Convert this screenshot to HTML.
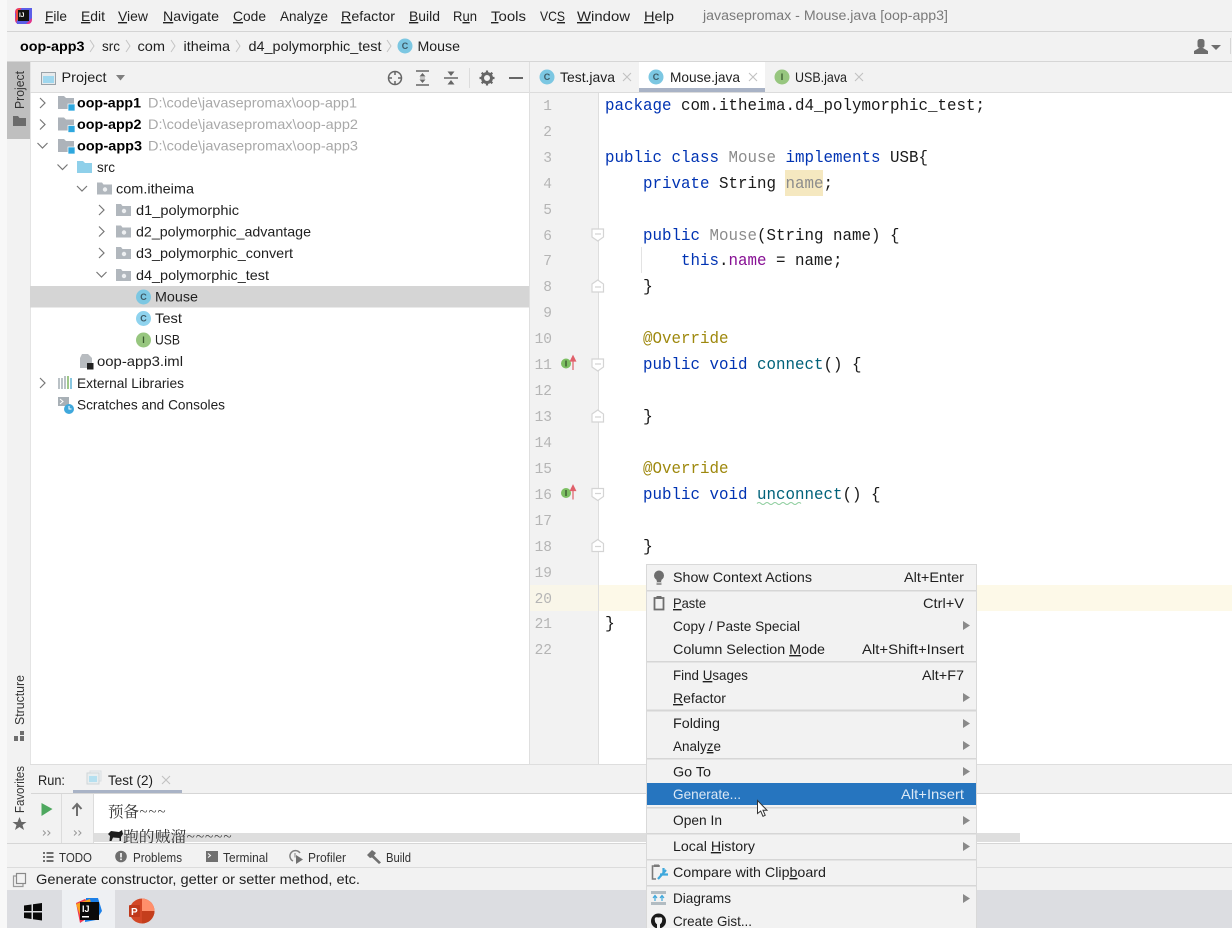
<!DOCTYPE html>
<html><head><meta charset="utf-8"><title>Mouse.java</title>
<style>
html,body{margin:0;padding:0;background:#fff;width:1232px;height:928px;overflow:hidden}
svg{display:block;filter:blur(.3px)}
text{font-family:"Liberation Sans","Noto Sans CJK SC",sans-serif;font-size:14px;fill:#1f1f1f;white-space:pre}
.m{font-size:14px;fill:#222}
.g{fill:#a9a9a9}
.b{font-weight:bold;fill:#000}
.s{font-size:12.5px;fill:#333}
.c{font-family:"Liberation Mono","DejaVu Sans Mono",monospace;font-size:16.5px;fill:#1a1a1a}
.k{fill:#0033b3}.u{fill:#8c8c8c}.f{fill:#871094}.a{fill:#9e880d}.d{fill:#00627a}
.n{font-family:"Liberation Mono",monospace;font-size:14.5px;fill:#b5b5b5;text-anchor:end}
.l{font-size:9px;font-weight:bold;fill:#3d5a66;text-anchor:middle}
.ch{fill:none;stroke:#777;stroke-width:1.2}
.cr{fill:none;stroke:#c4c4c4;stroke-width:1}
.x{fill:none;stroke:#c2c2c2;stroke-width:1.1}
.fd{fill:#fff;stroke:#d4d4d4;stroke-width:1.2}
.sep{fill:#d6d6d6}
.ar{fill:#8a8a8a}
.un{text-decoration:underline}
.r{font-family:"Noto Serif CJK SC",serif;font-size:15.5px;fill:#333}
</style></head><body>
<svg width="1232" height="928" viewBox="0 0 1232 928" xmlns="http://www.w3.org/2000/svg">
<defs>
<g id="pk"><path d="M0 1H5L6.5 3H15V13H0Z" fill="#b1b7bd"/><circle cx="8" cy="8" r="2.2" fill="#eef0f2"/></g>
<g id="mod"><path d="M0 1H6L8 3H16V14H0Z" fill="#adb3ba"/><rect x="10" y="9" width="7" height="7" fill="#2ea7de" stroke="#fff" stroke-width=".7"/></g>
</defs>

<!-- base -->
<rect width="1232" height="928" fill="#f2f2f2"/>
<rect width="7" height="928" fill="#f8f8f8"/>
<rect x="7" y="31" width="1225" height="1" fill="#d4d4d4"/>
<rect x="7" y="61" width="1225" height="1" fill="#d6d6d6"/>

<!-- logo -->
<rect x="15" y="8" width="17" height="16" rx="4" fill="#e0348b"/>
<path d="M15 14L22 8H32V18L26 24H17Z" fill="#5b5ee8"/>
<path d="M16 10L20 8L22 14L16 22Z" fill="#f04a3e"/>
<rect x="18" y="10" width="11" height="11" fill="#111"/>
<text x="19" y="17" style="font-size:6.5px;font-weight:bold;fill:#fff">IJ</text>

<!-- menu -->
<g>
<text class="m" y="21" x="45" textLength="22" lengthAdjust="spacingAndGlyphs"><tspan class="un">F</tspan>ile</text>
<text class="m" y="21" x="81" textLength="24" lengthAdjust="spacingAndGlyphs"><tspan class="un">E</tspan>dit</text>
<text class="m" y="21" x="118" textLength="30" lengthAdjust="spacingAndGlyphs"><tspan class="un">V</tspan>iew</text>
<text class="m" y="21" x="163" textLength="56" lengthAdjust="spacingAndGlyphs"><tspan class="un">N</tspan>avigate</text>
<text class="m" y="21" x="233" textLength="33" lengthAdjust="spacingAndGlyphs"><tspan class="un">C</tspan>ode</text>
<text class="m" y="21" x="280" textLength="48" lengthAdjust="spacingAndGlyphs">Analy<tspan class="un">z</tspan>e</text>
<text class="m" y="21" x="341" textLength="54" lengthAdjust="spacingAndGlyphs"><tspan class="un">R</tspan>efactor</text>
<text class="m" y="21" x="409" textLength="31" lengthAdjust="spacingAndGlyphs"><tspan class="un">B</tspan>uild</text>
<text class="m" y="21" x="453" textLength="24" lengthAdjust="spacingAndGlyphs">R<tspan class="un">u</tspan>n</text>
<text class="m" y="21" x="491" textLength="35" lengthAdjust="spacingAndGlyphs"><tspan class="un">T</tspan>ools</text>
<text class="m" y="21" x="540" textLength="25" lengthAdjust="spacingAndGlyphs">VC<tspan class="un">S</tspan></text>
<text class="m" y="21" x="577" textLength="53" lengthAdjust="spacingAndGlyphs"><tspan class="un">W</tspan>indow</text>
<text class="m" y="21" x="644" textLength="30" lengthAdjust="spacingAndGlyphs"><tspan class="un">H</tspan>elp</text>
<text y="20" x="703" textLength="245" lengthAdjust="spacingAndGlyphs" style="font-size:13.5px;fill:#7a7a7a">javasepromax - Mouse.java [oop-app3]</text>
</g>

<!-- breadcrumb -->
<text class="b" y="51" x="20" textLength="64.5" lengthAdjust="spacingAndGlyphs">oop-app3</text>
<path class="cr" d="M90 40L94 46L90 52M126 40L130 46L126 52M171 40L175 46L171 52M236 40L240 46L236 52M387 40L391 46L387 52"/>
<text y="51" x="102" textLength="18" lengthAdjust="spacingAndGlyphs">src</text>
<text y="51" x="137.5" textLength="27.5" lengthAdjust="spacingAndGlyphs">com</text>
<text y="51" x="183.5" textLength="46.5" lengthAdjust="spacingAndGlyphs">itheima</text>
<text y="51" x="248.5" textLength="133" lengthAdjust="spacingAndGlyphs">d4_polymorphic_test</text>
<circle cx="405" cy="46" r="7.5" fill="#7cc7e2"/><text class="l" x="405" y="49">C</text>
<text y="51" x="417.5" textLength="42.5" lengthAdjust="spacingAndGlyphs">Mouse</text>
<!-- user -->
<rect x="1197.500" y="39" width="7" height="9" rx="2.500" fill="#6e6e6e"/><path d="M1194 54V51L1199 48H1203L1208 51V54Z" fill="#6e6e6e"/>
<path d="M1211 45H1221L1216 50Z" fill="#6e6e6e"/>
<rect x="1230" y="38" width="1" height="16" fill="#d6d6d6"/>

<!-- left strip -->
<rect x="7" y="62" width="23" height="77" fill="#bfbfbf"/>
<rect x="30" y="62" width="1" height="703" fill="#e4e4e4"/>
<text transform="translate(24,109) rotate(-90)" textLength="38" lengthAdjust="spacingAndGlyphs" style="font-size:12.5px;fill:#333">Project</text>
<path d="M13 116H18L19.5 118H26V126H13Z" fill="#6b6b6b"/>
<text transform="translate(24,725) rotate(-90)" textLength="50" lengthAdjust="spacingAndGlyphs" style="font-size:12.5px;fill:#333">Structure</text>
<path d="M20 731h4v4h-4zM14 736h4v5h-4zM20 736h4v5h-4z" fill="#6e6e6e"/>
<text transform="translate(24,813) rotate(-90)" textLength="47" lengthAdjust="spacingAndGlyphs" style="font-size:12.5px;fill:#333">Favorites</text>
<path d="M19.500 817L21.500 822H26.500L22.500 825L24 830L19.500 827L15 830L16.500 825L12.500 822H17.500Z" fill="#666"/>

<!-- project header -->
<rect x="30" y="92" width="499" height="1" fill="#dcdcdc"/>
<rect x="41.500" y="72.500" width="14" height="12" fill="#e6eaec" stroke="#9aa2a8"/>
<rect x="43" y="76" width="11" height="7" fill="#9fd7ee"/>
<text y="82" x="61.500" textLength="45" lengthAdjust="spacingAndGlyphs">Project</text>
<path d="M116 75H125L120.500 80.500Z" fill="#7f7f7f"/>
<circle cx="395" cy="78" r="6.500" fill="none" stroke="#666" stroke-width="1.500"/>
<path d="M395 71V75M395 81V85M388 78H392M398 78H402" stroke="#666" stroke-width="1.500"/>
<path d="M416 71H429M416 85H429" stroke="#666" stroke-width="1.500"/><path d="M422.500 73L419.500 76.500H425.500ZM422.500 83L419.500 79.500H425.500Z" fill="#666"/><path d="M420 78H425" stroke="#999"/>
<path d="M444 78H458" stroke="#666" stroke-width="1.500"/><path d="M451 76L447.500 71.500H454.500ZM451 80L447.500 84.500H454.500Z" fill="#666"/>
<rect x="469" y="68" width="1" height="20" fill="#dcdcdc"/>
<circle cx="487" cy="78" r="4.500" fill="none" stroke="#666" stroke-width="3"/>
<path d="M487 70.500V73M487 83V85.500M479.500 78H482M492 78H494.500M481.700 72.700L483.500 74.500M490.500 81.500L492.300 83.300M492.300 72.700L490.500 74.500M483.500 81.500L481.700 83.300" stroke="#666" stroke-width="2.200"/>
<rect x="509" y="77" width="14" height="2" fill="#666"/>

<!-- tree -->
<rect x="31" y="93" width="498" height="672" fill="#fff"/>
<rect x="30" y="286" width="499" height="21.500" fill="#d5d5d5"/>
<path class="ch" d="M40 98L45 103L40 108M40 119.500L45 124.500L40 129.500M37.500 143L42.500 148L47.500 143M57.500 164.500L62.500 169.500L67.500 164.500M77 186L82 191L87 186M99 205L104 210L99 215M99 226.500L104 231.500L99 236.500M99 248L104 253L99 258M96.500 272L101.500 277L106.500 272M40 378L45 383L40 388"/>
<use href="#mod" x="58" y="95"/><use href="#mod" x="58" y="116.500"/><use href="#mod" x="58" y="138"/>
<text class="b" y="107.500" x="77" textLength="64" lengthAdjust="spacingAndGlyphs">oop-app1</text>
<text class="b" y="129" x="77" textLength="64.500" lengthAdjust="spacingAndGlyphs">oop-app2</text>
<text class="b" y="150.500" x="77" textLength="65" lengthAdjust="spacingAndGlyphs">oop-app3</text>
<text class="g" y="107.500" x="148" textLength="209" lengthAdjust="spacingAndGlyphs">D:\code\javasepromax\oop-app1</text>
<text class="g" y="129" x="148" textLength="210" lengthAdjust="spacingAndGlyphs">D:\code\javasepromax\oop-app2</text>
<text class="g" y="150.500" x="148" textLength="210" lengthAdjust="spacingAndGlyphs">D:\code\javasepromax\oop-app3</text>
<path d="M77 161H83L85 163H92V173H77Z" fill="#8fd0ea"/>
<text y="172" x="97" textLength="18" lengthAdjust="spacingAndGlyphs">src</text>
<use href="#pk" x="97" y="181.500"/>
<text y="193.500" x="116" textLength="78" lengthAdjust="spacingAndGlyphs">com.itheima</text>
<use href="#pk" x="116" y="203"/><text y="215" x="136" textLength="103" lengthAdjust="spacingAndGlyphs">d1_polymorphic</text>
<use href="#pk" x="116" y="224.500"/><text y="236.500" x="136" textLength="175" lengthAdjust="spacingAndGlyphs">d2_polymorphic_advantage</text>
<use href="#pk" x="116" y="246"/><text y="258" x="136" textLength="157" lengthAdjust="spacingAndGlyphs">d3_polymorphic_convert</text>
<use href="#pk" x="116" y="268"/><text y="280" x="136" textLength="133" lengthAdjust="spacingAndGlyphs">d4_polymorphic_test</text>
<circle cx="143.500" cy="297" r="7.500" fill="#7cc7e2"/><text class="l" x="143.500" y="300">C</text>
<text y="301.500" x="155" textLength="43" lengthAdjust="spacingAndGlyphs">Mouse</text>
<circle cx="143.500" cy="318.500" r="7.500" fill="#8fd3ee"/><text class="l" x="143.500" y="321.500">C</text>
<text y="323" x="155" textLength="27" lengthAdjust="spacingAndGlyphs">Test</text>
<circle cx="143.500" cy="340" r="7.500" fill="#97c67f"/><text class="l" x="143.500" y="343" style="fill:#3a5a30">I</text>
<text y="344.500" x="155" textLength="25" lengthAdjust="spacingAndGlyphs">USB</text>
<path d="M82 354H88L92 358V368H80V358Z" fill="#b8bcc0"/><rect x="87" y="363" width="6.500" height="6.500" fill="#222"/>
<text y="366" x="97" textLength="86" lengthAdjust="spacingAndGlyphs">oop-app3.iml</text>
<path d="M59 378V389M62 378V389M65 376V389" stroke="#a9b2b8" stroke-width="1.600"/><path d="M68 376V389" stroke="#85b96b" stroke-width="1.600"/><path d="M71 378V389" stroke="#6bb7d8" stroke-width="1.600"/>
<text y="388" x="77" textLength="107" lengthAdjust="spacingAndGlyphs">External Libraries</text>
<rect x="58" y="397" width="11" height="9" fill="#a8b0b6"/><path d="M60 399L63 401.500L60 404" fill="none" stroke="#fff"/>
<circle cx="69" cy="409" r="5" fill="#3fa8dc"/><path d="M69 406V409H71.500" fill="none" stroke="#fff"/>
<text y="409.500" x="77" textLength="148" lengthAdjust="spacingAndGlyphs">Scratches and Consoles</text>
<rect x="529" y="62" width="1" height="703" fill="#dfdfdf"/>

<!-- tabs -->
<rect x="530" y="92" width="702" height="1" fill="#dcdcdc"/>
<rect x="639" y="62" width="126" height="30" fill="#fff"/>
<rect x="639" y="88" width="126" height="4" fill="#a9b3c6"/>
<circle cx="547" cy="77" r="7.500" fill="#7cc7e2"/><text class="l" x="547" y="80">C</text>
<text y="82" x="560" textLength="55" lengthAdjust="spacingAndGlyphs">Test.java</text>
<path class="x" d="M623 73L631 81M631 73L623 81"/>
<circle cx="656" cy="77" r="7.500" fill="#7cc7e2"/><text class="l" x="656" y="80">C</text>
<text y="82" x="670" textLength="70" lengthAdjust="spacingAndGlyphs">Mouse.java</text>
<path class="x" d="M749 73L757 81M757 73L749 81"/>
<circle cx="782" cy="77" r="7.500" fill="#97c67f"/><text class="l" x="782" y="80" style="fill:#3a5a30">I</text>
<text y="82" x="795" textLength="52" lengthAdjust="spacingAndGlyphs">USB.java</text>
<path class="x" d="M855 73L863 81M863 73L855 81"/>

<!-- editor -->
<rect x="530" y="93" width="702" height="672" fill="#fff"/>
<rect x="530" y="93" width="68" height="672" fill="#f2f2f2"/>
<rect x="598" y="93" width="1" height="672" fill="#dedede"/>
<rect x="530" y="585" width="68" height="26" fill="#f9f6e9"/>
<rect x="599" y="585" width="633" height="26" fill="#fdf9e8"/>
<rect x="785" y="170" width="38" height="26" fill="#f5e8c0"/>
<g>
<text class="n" x="552" y="110">1</text><text class="n" x="552" y="136">2</text><text class="n" x="552" y="162">3</text><text class="n" x="552" y="188">4</text><text class="n" x="552" y="214">5</text><text class="n" x="552" y="240">6</text><text class="n" x="552" y="265">7</text><text class="n" x="552" y="291">8</text><text class="n" x="552" y="317">9</text><text class="n" x="552" y="343">10</text><text class="n" x="552" y="369">11</text><text class="n" x="552" y="395">12</text><text class="n" x="552" y="421">13</text><text class="n" x="552" y="447">14</text><text class="n" x="552" y="473">15</text><text class="n" x="552" y="499">16</text><text class="n" x="552" y="525">17</text><text class="n" x="552" y="551">18</text><text class="n" x="552" y="577">19</text><text class="n" x="552" y="603">20</text><text class="n" x="552" y="628">21</text><text class="n" x="552" y="654">22</text>
</g>
<g>
<circle cx="566" cy="363.500" r="5" fill="#7cbf62"/><rect x="565.300" y="360.500" width="1.400" height="6" fill="#3a5a30"/>
<path d="M573 370V358M570.500 361L573 356L575.500 361Z" stroke="#e0606a" stroke-width="1.200" fill="#e0606a"/>
<circle cx="566" cy="493" r="5" fill="#7cbf62"/><rect x="565.300" y="490" width="1.400" height="6" fill="#3a5a30"/>
<path d="M573 499.500V487.500M570.500 490.500L573 485.500L575.500 490.500Z" stroke="#e0606a" stroke-width="1.200" fill="#e0606a"/>
<path class="fd" d="M592 229H603.500V237L597.800 241L592 237ZM595 234H601"/>
<path class="fd" d="M592 359H603.500V367L597.800 371L592 367ZM595 364H601"/>
<path class="fd" d="M592 488.500H603.500V496.500L597.800 500.500L592 496.500ZM595 493.500H601"/>
<path class="fd" d="M592 292H603.500V284L597.800 280L592 284ZM595 287H601"/>
<path class="fd" d="M592 422H603.500V414L597.800 410L592 414ZM595 417H601"/>
<path class="fd" d="M592 551.500H603.500V543.500L597.800 539.500L592 543.500ZM595 546.500H601"/>
<rect x="641" y="247" width="1" height="26" fill="#e3e3e3"/>
</g>
<text class="c" y="110" x="605" textLength="380" lengthAdjust="spacingAndGlyphs"><tspan class="k">package</tspan> com.itheima.d4_polymorphic_test;</text>
<text class="c" y="162" x="605" textLength="323" lengthAdjust="spacingAndGlyphs"><tspan class="k">public class</tspan> <tspan class="u">Mouse</tspan> <tspan class="k">implements</tspan> USB{</text>
<text class="c" y="188" x="643" textLength="190" lengthAdjust="spacingAndGlyphs"><tspan class="k">private</tspan> String <tspan class="u">name</tspan>;</text>
<text class="c" y="240" x="643" textLength="256.500" lengthAdjust="spacingAndGlyphs"><tspan class="k">public</tspan> <tspan class="u">Mouse</tspan>(String name) {</text>
<text class="c" y="265" x="681" textLength="161.500" lengthAdjust="spacingAndGlyphs"><tspan class="k">this</tspan>.<tspan class="f">name</tspan> = name;</text>
<text class="c" y="291" x="643">}</text>
<text class="c a" y="343" x="643" textLength="85.500" lengthAdjust="spacingAndGlyphs">@Override</text>
<text class="c" y="369" x="643" textLength="218.500" lengthAdjust="spacingAndGlyphs"><tspan class="k">public void</tspan> <tspan class="d">connect</tspan>() {</text>
<text class="c" y="421" x="643">}</text>
<text class="c a" y="473" x="643" textLength="85.500" lengthAdjust="spacingAndGlyphs">@Override</text>
<text class="c" y="499" x="643" textLength="237.500" lengthAdjust="spacingAndGlyphs"><tspan class="k">public void</tspan> <tspan class="d">unconnect</tspan>() {</text>
<path d="M757 503.500q2 -2 4 0t4 0t4 0t4 0t4 0t4 0t4 0t4 0t4 0t4 0t4 0" fill="none" stroke="#8fce9f" stroke-width="1"/>
<text class="c" y="551" x="643">}</text>
<text class="c" y="628" x="605">}</text>

<!-- run panel -->
<rect x="30" y="764" width="1202" height="1" fill="#dedede"/>
<rect x="31" y="765" width="1201" height="28" fill="#f2f2f2"/>
<rect x="31" y="793" width="1201" height="1" fill="#d6d6d6"/>
<rect x="73" y="790" width="109" height="3" fill="#a9b3c6"/>
<text y="785" x="38" textLength="27" lengthAdjust="spacingAndGlyphs" style="font-size:13.500px">Run:</text>
<rect x="90" y="771" width="11" height="10" fill="#eef1f2" stroke="#dadfe2"/>
<rect x="87" y="773" width="12" height="11" fill="#e8eef0" stroke="#d0d5d8"/>
<rect x="89" y="776" width="8" height="6" fill="#b5e0f0"/>
<text y="785" x="108" textLength="45" lengthAdjust="spacingAndGlyphs" style="font-size:13.500px">Test (2)</text>
<path class="x" d="M162 776L170 784M170 776L162 784"/>
<rect x="31" y="794" width="62" height="49" fill="#f2f2f2"/>
<rect x="61" y="794" width="1" height="49" fill="#dcdcdc"/>
<rect x="93" y="794" width="1" height="49" fill="#dcdcdc"/>
<rect x="94" y="794" width="1138" height="49" fill="#fff"/>
<path d="M41.500 803L52.500 809L41.500 816Z" fill="#4ea85f"/>
<path d="M77 816V805M72.500 809L77 804L81.500 809" fill="none" stroke="#6e6e6e" stroke-width="2"/>
<path d="M43 830.500L45.500 833L43 835.500M47.500 830.500L50 833L47.500 835.500M74 830.500L76.500 833L74 835.500M78.500 830.500L81 833L78.500 835.500" fill="none" stroke="#999"/>
<rect x="94" y="833" width="926" height="9" fill="#dedede"/>
<svg x="94" y="794" width="1000" height="49">
<text class="r" x="14" y="23" textLength="58" lengthAdjust="spacingAndGlyphs">预备~~~</text>
<path d="M14 40L17 37L25 38L28 36L29 40L27 43V47H25.500V44L19 43.500L17.500 47H15.500L16 42Z" fill="#1c1c1c"/>
<text class="r" x="29" y="48" textLength="109" lengthAdjust="spacingAndGlyphs">跑的贼溜~~~~~</text>
</svg>

<!-- bottom tool bar -->
<rect x="7" y="843" width="1225" height="1" fill="#d6d6d6"/>
<rect x="7" y="844" width="1225" height="24" fill="#f2f2f2"/>
<rect x="7" y="867" width="1225" height="1" fill="#dcdcdc"/>
<path d="M43 852h2v2h-2zM43 856h2v2h-2zM43 860h2v2h-2zM46.500 852h7v2h-7zM46.500 856h7v2h-7zM46.500 860h7v2h-7z" fill="#6e6e6e"/>
<text class="s" y="862" x="59" textLength="33" lengthAdjust="spacingAndGlyphs">TODO</text>
<circle cx="121" cy="856.500" r="5.800" fill="#6e6e6e"/><rect x="120.200" y="853" width="1.600" height="4.500" fill="#fff"/><rect x="120.200" y="858.500" width="1.600" height="1.600" fill="#fff"/>
<text class="s" y="862" x="133" textLength="49" lengthAdjust="spacingAndGlyphs">Problems</text>
<rect x="206" y="851" width="12" height="11" fill="#707070"/><path d="M208 853.500L210.500 855.500L208 857.500" fill="none" stroke="#fff"/>
<text class="s" y="862" x="223" textLength="45" lengthAdjust="spacingAndGlyphs">Terminal</text>
<path d="M300 853A5.500 5.500 0 1 0 293 861" fill="none" stroke="#808080" stroke-width="1.500"/><path d="M296 855L303 859.500L296 864Z" fill="#707070"/><path d="M295 853V857.500" stroke="#808080"/>
<text class="s" y="862" x="308" textLength="38" lengthAdjust="spacingAndGlyphs">Profiler</text>
<path d="M367 855L372 850L376 853L374 855.500L381 862.500L379 864L372 857.500L370 858Z" fill="#707070"/>
<text class="s" y="862" x="386" textLength="25" lengthAdjust="spacingAndGlyphs">Build</text>

<!-- status bar -->
<rect x="7" y="868" width="1225" height="22" fill="#f2f2f2"/>
<rect x="16.500" y="873.500" width="9" height="10" fill="#f2f2f2" stroke="#8a8a8a" stroke-width="1.200"/>
<path d="M16 876H13.500V886.500H23V884" fill="none" stroke="#9a9a9a" stroke-width="1.200"/>
<text y="884" x="36" textLength="324" lengthAdjust="spacingAndGlyphs">Generate constructor, getter or setter method, etc.</text>

<!-- taskbar -->
<rect x="7" y="890" width="1225" height="38" fill="#dcdde1"/>
<rect x="62" y="890" width="53" height="38" fill="#eef0f3"/>
<path d="M24 905.500L31.500 904.500V911H24ZM33 904.200L42 903V911H33ZM24 912.500H31.500V919L24 918ZM33 912.500H42V920.500L33 919.300Z" fill="#0a0a0a"/>
<path d="M76 903L85 899L92 905L89 917L80 923L78 913Z" fill="#f0364f"/>
<path d="M86 898H98L102 911L96 920L85 922Z" fill="#1a7fe8"/>
<path d="M76 904L90 899L92 908L80 915Z" fill="#f9a01b"/>
<rect x="80" y="902" width="19" height="18" fill="#0a0a0a"/>
<text x="82" y="912" style="font-size:9px;font-weight:bold;fill:#fff">IJ</text>
<rect x="82" y="916" width="7" height="1.500" fill="#fff"/>
<circle cx="142" cy="911" r="12.500" fill="#d24726"/>
<path d="M142 898.500A12.500 12.500 0 0 1 154.500 911H142Z" fill="#ff8f6b"/>
<path d="M142 911H154.500A12.500 12.500 0 0 1 142 923.500Z" fill="#c43e1c"/>
<rect x="129" y="905" width="11" height="12" rx="1" fill="#c0391b"/>
<text x="131" y="915" style="font-size:10px;font-weight:bold;fill:#fff">P</text>

<!-- context menu -->
<rect x="646" y="564" width="331" height="364" fill="#d9d9d9"/>
<rect x="647" y="565" width="329" height="363" fill="#f2f2f2"/>
<rect x="647" y="590" width="329" height="1.500" class="sep"/>
<rect x="647" y="661" width="329" height="1.500" class="sep"/>
<rect x="647" y="709.500" width="329" height="2" class="sep"/>
<rect x="647" y="758" width="329" height="1.500" class="sep"/>
<rect x="647" y="807" width="329" height="1.500" class="sep"/>
<rect x="647" y="833" width="329" height="1.500" class="sep"/>
<rect x="647" y="859" width="329" height="1.500" class="sep"/>
<rect x="647" y="885" width="329" height="1.500" class="sep"/>
<rect x="647" y="783" width="329" height="22" fill="#2675bf"/>

<circle cx="659" cy="575.500" r="5" fill="#6e6e6e"/><path d="M656 578H662L661 582H657Z" fill="#6e6e6e"/><rect x="656.500" y="582.500" width="5" height="2.500" fill="#9a9a9a"/>
<rect x="654.500" y="598" width="9" height="11.500" fill="none" stroke="#6e6e6e" stroke-width="1.800"/><rect x="656.500" y="596" width="5" height="3" fill="#6e6e6e"/>
<text y="582" x="673" textLength="139" lengthAdjust="spacingAndGlyphs">Show Context Actions</text>
<text y="582" x="904" textLength="60" lengthAdjust="spacingAndGlyphs">Alt+Enter</text>
<text y="608" x="673" textLength="33" lengthAdjust="spacingAndGlyphs"><tspan class="un">P</tspan>aste</text>
<text y="608" x="923" textLength="41" lengthAdjust="spacingAndGlyphs">Ctrl+V</text>
<text y="631" x="673" textLength="127" lengthAdjust="spacingAndGlyphs">Copy / Paste Special</text>
<text y="654" x="673" textLength="152" lengthAdjust="spacingAndGlyphs">Column Selection <tspan class="un">M</tspan>ode</text>
<text y="654" x="862" textLength="102" lengthAdjust="spacingAndGlyphs">Alt+Shift+Insert</text>
<text y="680" x="673" textLength="75" lengthAdjust="spacingAndGlyphs">Find <tspan class="un">U</tspan>sages</text>
<text y="680" x="922" textLength="42" lengthAdjust="spacingAndGlyphs">Alt+F7</text>
<text y="703" x="673" textLength="53" lengthAdjust="spacingAndGlyphs"><tspan class="un">R</tspan>efactor</text>
<text y="728" x="673" textLength="47" lengthAdjust="spacingAndGlyphs">Folding</text>
<text y="751" x="673" textLength="48" lengthAdjust="spacingAndGlyphs">Analy<tspan class="un">z</tspan>e</text>
<text y="776.500" x="673" textLength="38" lengthAdjust="spacingAndGlyphs">Go To</text>
<text y="799" x="673" textLength="68" lengthAdjust="spacingAndGlyphs" style="fill:#dbe8f5">Generate...</text>
<text y="799" x="901" textLength="63" lengthAdjust="spacingAndGlyphs" style="fill:#dbe8f5">Alt+Insert</text>
<text y="825" x="673" textLength="49" lengthAdjust="spacingAndGlyphs">Open In</text>
<text y="851" x="673" textLength="82" lengthAdjust="spacingAndGlyphs">Local <tspan class="un">H</tspan>istory</text>
<text y="877" x="673" textLength="153" lengthAdjust="spacingAndGlyphs">Compare with Clip<tspan class="un">b</tspan>oard</text>
<text y="903" x="673" textLength="58" lengthAdjust="spacingAndGlyphs">Diagrams</text>
<text y="926" x="673" textLength="79" lengthAdjust="spacingAndGlyphs">Create Gist...</text>
<path class="ar" d="M963 621L970 625.500L963 630ZM963 693L970 697.500L963 702ZM963 719L970 723.500L963 728ZM963 741L970 745.500L963 750ZM963 767L970 771.500L963 776ZM963 816L970 820.500L963 825ZM963 842L970 846.500L963 851ZM963 894L970 898.500L963 903Z"/>
<!-- compare icon -->
<path d="M660 866H652.500V879H656" fill="none" stroke="#7a7a7a" stroke-width="1.600"/><rect x="654" y="864.500" width="5" height="2.500" fill="#7a7a7a"/>
<path d="M658 879L666 870M660 874.500H668M663.500 868V873" fill="none" stroke="#3fa8dc" stroke-width="2.200"/>
<!-- diagrams icon -->
<rect x="651" y="891" width="15" height="3" fill="#b2bcc2"/><rect x="651" y="902" width="15" height="3" fill="#b2bcc2"/>
<path d="M655 901V896M653 898L655 895.500L657 898M662 901V896M660 898L662 895.500L664 898" fill="none" stroke="#3fa8dc" stroke-width="1.200"/>
<!-- github -->
<circle cx="658.500" cy="921" r="7.500" fill="#1a1a1a"/><path d="M655 921C654 917 656 917 658.500 917.500C661 917 663 917 662 921C662 923 660 924 660 924.500V928.500H657V924.500C657 924 655 923 655 921Z" fill="#f2f2f2"/>
<!-- cursor -->
<path d="M757.500 800.500V813.500L760.700 811L763 816.300L765.200 815.300L763 810.300H767Z" fill="#fff" stroke="#333" stroke-width="1"/>
</svg>
</body></html>
